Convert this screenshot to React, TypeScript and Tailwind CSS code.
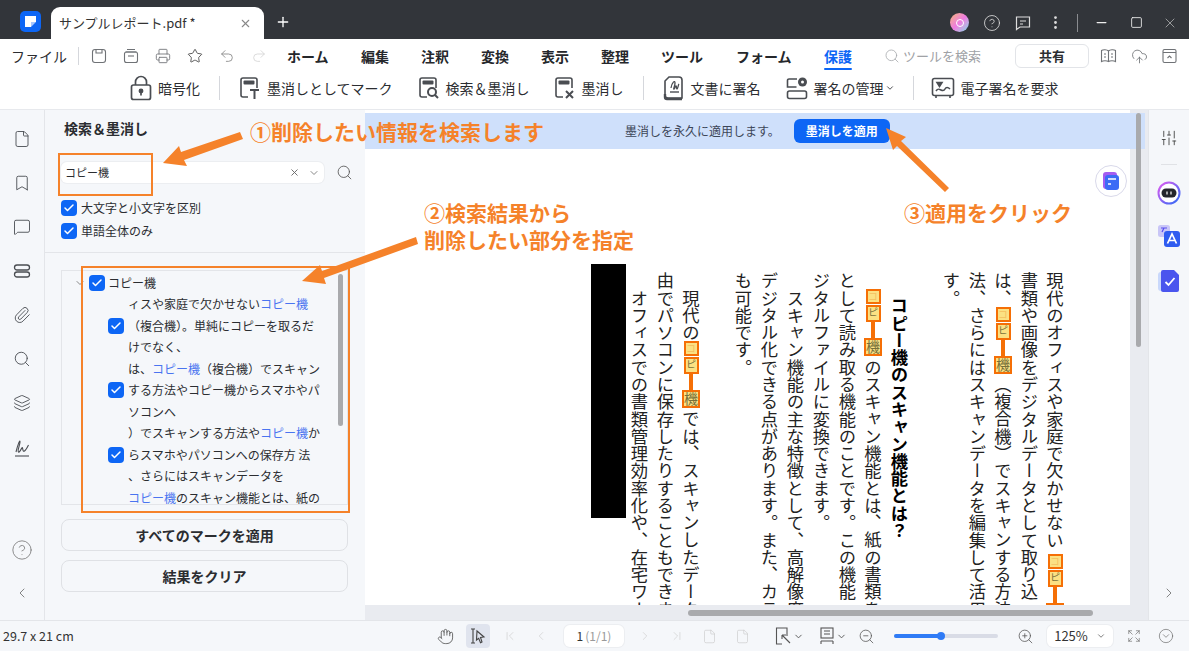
import {
  Bookmark,
  Check,
  ChevronDown,
  ChevronFirst,
  ChevronLast,
  ChevronLeft,
  ChevronRight,
  CircleChevronDown,
  CircleHelp,
  CloudUpload,
  Expand,
  File,
  Hand,
  Layers,
  MessageSquare,
  Minus,
  MoreVertical,
  Paperclip,
  Plus,
  Printer,
  Redo2,
  Search,
  SlidersVertical,
  Square,
  Star,
  Undo2,
  X,
  ZoomIn,
  ZoomOut,
} from 'lucide-react'

const ORANGE = '#f5822a'

function Tick({ className = '' }: { className?: string }) {
  return (
    <span className={`flex h-[16px] w-[16px] shrink-0 items-center justify-center rounded-[4px] bg-[#0d66f5] ${className}`}>
      <Check size={12} strokeWidth={3} color="#fff" />
    </span>
  )
}

function Divider() {
  return <span className="block h-[24px] w-px shrink-0 bg-[#d5d7dc]" />
}

// toolbar pictograms: sheet with a dark header and a small badge at the corner
function SheetIcon({ badge }: { badge: 'T' | 'search' | 'x' }) {
  return (
    <svg width="22" height="24" viewBox="0 0 22 24" fill="none" stroke="#4a4d52" strokeWidth="1.6">
      <path d="M9 21H4a2 2 0 0 1-2-2V4a2 2 0 0 1 2-2h12a2 2 0 0 1 2 2v8" />
      <rect x="4.5" y="4.5" width="11" height="4" fill="#4a4d52" stroke="none" rx="1" />
      {badge === 'T' && <path d="M11 14h9M15.5 14v9" strokeWidth="2" />}
      {badge === 'search' && (
        <>
          <circle cx="14" cy="16" r="4" strokeWidth="2" />
          <path d="M17 19l3 3" strokeWidth="2" />
        </>
      )}
      {badge === 'x' && <path d="M12 15l7 7M19 15l-7 7" strokeWidth="2" />}
    </svg>
  )
}

function LockIcon() {
  return (
    <svg width="22" height="26" viewBox="0 0 22 26" fill="none" stroke="#4a4d52" strokeWidth="1.7">
      <rect x="1.5" y="10" width="19" height="14.5" rx="2" />
      <path d="M5.5 10V7a5.5 5.5 0 0 1 11 0v3" />
      <circle cx="11" cy="16" r="1.6" fill="#4a4d52" />
      <path d="M11 17v3.5" />
    </svg>
  )
}

function SignDocIcon() {
  return (
    <svg width="22" height="26" viewBox="0 0 22 26" fill="none" stroke="#4a4d52" strokeWidth="1.6">
      <path d="M6 2h10a3 3 0 0 1 3 3v18H5a3 3 0 0 1-3-3V6z" />
      <path d="M2 19v3a2 2 0 0 0 2 2h15" strokeWidth="2.4" />
      <path d="M8 13c1-6 4-8 4-5s-2 6-1 6 1-3 2-3 0 3 1 3 1-4 2-5" strokeWidth="1.3" />
      <path d="M7 17h9" strokeWidth="1.4" />
    </svg>
  )
}

function ManageSignIcon() {
  return (
    <svg width="22" height="24" viewBox="0 0 22 24" fill="none" stroke="#4a4d52" strokeWidth="1.6">
      <path d="M11 3H3a1.500 1.500 0 0 0-1.500 1.500V11h9" />
      <rect x="1.500" y="15" width="19" height="7.500" rx="2" />
      <circle cx="16.500" cy="6" r="4.500" fill="#4a4d52" stroke="none" />
      <circle cx="16.500" cy="6" r="1.500" fill="#fff" stroke="none" />
    </svg>
  )
}

function RequestSignIcon() {
  return (
    <svg width="24" height="24" viewBox="0 0 24 24" fill="none" stroke="#4a4d52" strokeWidth="1.6">
      <rect x="1.500" y="2.500" width="21" height="17" rx="2" />
      <path d="M6 6.500h5l-2.500 4z" fill="#4a4d52" />
      <path d="M5 15c2-3 3-2 5-1s3 1 4-1 3-2 5 0" />
      <path d="M5 20v2M19 20v2" />
    </svg>
  )
}

function TabLogo() {
  return (
    <svg width="21" height="21" viewBox="0 0 21 21">
      <rect width="21" height="21" rx="5" fill="#0d66f5" />
      <path d="M5 5h11v6h-5v5H5z" fill="#fff" />
      <path d="M11 11h5l-5 5z" fill="#a9c8ff" />
    </svg>
  )
}

function MenuTab({ label, active, className = '' }: { label: string; active?: boolean; className?: string }) {
  return (
    <span className={`relative shrink-0 text-[14px] font-bold ${active ? 'text-[#0d66f5]' : 'text-[#25272b]'} ${className}`}>
      {label}
      {active && <span className="absolute -bottom-[3px] left-0 h-[2px] w-full rounded bg-[#0d66f5]" />}
    </span>
  )
}

function Tool({ icon, label, className = '' }: { icon: React.ReactNode; label: string; className?: string }) {
  return (
    <div className={`flex shrink-0 items-center gap-[6px] ${className}`}>
      {icon}
      <span className="text-[14px] text-[#2b2d31]">{label}</span>
    </div>
  )
}

function Blue({ children }: { children: React.ReactNode }) {
  return <span className="text-[#4a74f0]">{children}</span>
}

// one redacted hit in the vertical text
function Hit({ className = '' }: { className?: string }) {
  const box = 'block shrink-0 overflow-hidden border-2 border-[#f56f06] bg-[#fbe183]'
  return (
    <span className={`inline-flex h-[69px] w-[18px] -translate-x-[4px] items-center align-middle font-normal ${className}`}>
      <span className={`${box} h-[15px] w-[15px] text-[10px] leading-[11px] text-[#f5c060]`}>コ</span>
      <span className={`${box} mt-[1px] h-[17px] w-[15px] text-[10px] leading-[11px] text-[#77703a]`}>ピ</span>
      <span className="my-[1px] block h-[16px] w-[4px] shrink-0 bg-[#f56f06]" />
      <span className={`${box} h-[18px] w-[18px] text-[14px] leading-[14px] text-[#77703a]`}>機</span>
    </span>
  )
}

function VLine({ children, bold, blank }: { children?: React.ReactNode; bold?: boolean; blank?: boolean }) {
  return (
    <p className={`h-[360px] w-[26px] shrink-0 whitespace-nowrap text-[17.3px] leading-[26px] ${bold ? 'pt-[25px] font-bold text-black' : 'text-[#222]'}`}>
      {blank ? '\u00a0' : children}
    </p>
  )
}

const SIDE_TREE_TEXT = 'text-[12px] leading-[21.5px] text-[#2b2d31]'

export default function App() {
  return (
    <div className="relative flex h-screen w-full flex-col overflow-hidden bg-[#f5f7fa] font-['Noto_Sans_CJK_JP','Liberation_Sans',sans-serif] text-[#2b2d31]">
      {/* title bar */}
      <div className="flex h-[39px] shrink-0 items-end bg-[#32353a]">
        <div className="mb-[7px] ml-[20px] mr-[10px] shrink-0"><TabLogo /></div>
        <div className="flex h-[32px] w-[213px] shrink-0 items-center rounded-t-[9px] bg-white pl-[8px] pr-[12px]">
          <span className="flex-1 text-[13px] text-[#333]">サンプルレポート.pdf *</span>
          <X size={13} color="#888" />
        </div>
        <Plus size={16} color="#fff" className="mb-[9px] ml-[11px]" />
        <div className="mb-[7px] ml-auto flex items-center">
          <span className="mr-[14px] flex h-[19px] w-[19px] items-center justify-center rounded-full bg-gradient-to-br from-[#f7b267] via-[#ee7ae0] to-[#57d8e6]">
            <span className="h-[8px] w-[8px] rounded-full border border-white" />
          </span>
          <CircleHelp size={18} strokeWidth={1.1} color="#ddd" className="mr-[14px]" />
          <svg width="16" height="16" viewBox="0 0 16 16" fill="none" stroke="#ddd" strokeWidth="1.2" className="mr-[16px]">
            <path d="M1.500 2h13v10H5l-3.500 2.500zM5 6h6M5 9h3" />
          </svg>
          <MoreVertical size={17} color="#ddd" className="mr-[13px]" />
          <span className="mr-[16px] h-[18px] w-px bg-[#8a8c90]" />
          <Minus size={15} color="#eee" className="mr-[21px]" />
          <Square size={13} strokeWidth={1.6} color="#eee" className="mr-[19px]" />
          <X size={16} strokeWidth={1} color="#ccc" className="mr-[11px]" />
        </div>
      </div>

      {/* menu row */}
      <div className="flex h-[34px] shrink-0 items-center bg-white pl-[11px]">
        <span className="w-[56px] shrink-0 text-[14px]">ファイル</span>
        <span className="ml-[11px] h-[18px] w-px bg-[#d5d7dc]" />
        <div className="ml-[12px] flex w-[196px] shrink-0 items-center gap-[16px] text-[#6f7276]">
          <Save />
          <Archive />
          <Printer size={16} strokeWidth={1.3} />
          <Star size={16} strokeWidth={1.3} color="#444" />
          <Undo2 size={16} strokeWidth={1.3} color="#888" />
          <Redo2 size={16} strokeWidth={1.3} color="#d5d5d5" />
        </div>
        <MenuTab label="ホーム" className="w-[74px]" />
        <MenuTab label="編集" className="w-[60px]" />
        <MenuTab label="注釈" className="w-[60px]" />
        <MenuTab label="変換" className="w-[60px]" />
        <MenuTab label="表示" className="w-[60px]" />
        <MenuTab label="整理" className="w-[60px]" />
        <MenuTab label="ツール" className="w-[75px]" />
        <MenuTab label="フォーム" className="w-[88px]" />
        <MenuTab label="保護" active />
        <Search size={16} strokeWidth={1.2} color="#a6a8ac" className="ml-[32px]" />
        <span className="ml-[3px] w-[112px] shrink-0 text-[13px] text-[#a0a2a6]">ツールを検索</span>
        <span className="flex h-[24px] w-[74px] shrink-0 items-center justify-center rounded-md border border-[#e2e4e8] text-[13px] font-bold">共有</span>
        <div className="ml-[11px] flex items-center gap-[14px] text-[#6f7276]">
          <BookIcon />
          <CloudUpload size={17} strokeWidth={1.2} />
          <DrawerIcon />
        </div>
      </div>

      {/* tool row */}
      <div className="flex h-[37px] shrink-0 items-center border-b border-[#e7e9ed] bg-white pb-[6px]">
        <Tool icon={<LockIcon />} label="暗号化" className="ml-[130px]" />
        <span className="ml-[19px]"><Divider /></span>
        <Tool icon={<SheetIcon badge="T" />} label="墨消しとしてマーク" className="ml-[19px]" />
        <Tool icon={<SheetIcon badge="search" />} label="検索＆墨消し" className="ml-[25px]" />
        <Tool icon={<SheetIcon badge="x" />} label="墨消し" className="ml-[24px]" />
        <span className="ml-[19px]"><Divider /></span>
        <Tool icon={<SignDocIcon />} label="文書に署名" className="ml-[19px]" />
        <Tool icon={<ManageSignIcon />} label="署名の管理" className="ml-[25px]" />
        <ChevronDown size={10} className="ml-[1px]" />
        <span className="ml-[18px]"><Divider /></span>
        <Tool icon={<RequestSignIcon />} label="電子署名を要求" className="ml-[17px]" />
      </div>

      {/* main */}
      <div className="flex min-h-0 flex-1">
        {/* left rail */}
        <div className="flex w-[45px] shrink-0 flex-col items-center border-r border-[#e3e5e9] pt-[20px] text-[#4a4d52]">
          <div className="flex flex-col items-center gap-[26px]">
            <File size={18} strokeWidth={1.2} />
            <Bookmark size={18} strokeWidth={1.2} />
            <MessageSquare size={18} strokeWidth={1.2} />
            <StackIcon />
            <Paperclip size={18} strokeWidth={1.2} />
            <Search size={18} strokeWidth={1.2} />
            <Layers size={18} strokeWidth={1.2} />
            <SignRailIcon />
          </div>
          <CircleHelp size={22} strokeWidth={0.9} color="#777" className="mt-auto" />
          <ChevronLeft size={16} strokeWidth={1.2} color="#666" className="mb-[19px] mt-[24px]" />
        </div>

        {/* search panel */}
        <div className="flex w-[320px] shrink-0 flex-col pl-[16px] pr-[17px]">
          <div className="pl-[3px] pt-[8px] text-[14px] font-bold leading-[20px]">検索＆墨消し</div>
          <div className="mt-[24px] flex items-center">
            <div className="flex h-[21px] w-[263px] shrink-0 items-center rounded-md bg-white pl-[4px] pr-[4px] shadow-[0_0_0_1px_#eceef1]">
              <span className="flex-1 text-[11px]">コピー機</span>
              <X size={11} color="#666" />
              <ChevronDown size={12} color="#888" className="ml-[8px]" />
            </div>
            <Search size={17} strokeWidth={1.2} color="#555" className="ml-[12px] shrink-0" />
          </div>
          <label className="mt-[16px] flex items-center gap-[4px] text-[12px] leading-[18px]"><Tick />大文字と小文字を区別</label>
          <label className="mt-[5px] flex items-center gap-[4px] text-[12px] leading-[18px]"><Tick />単語全体のみ</label>
          <div className="-ml-[16px] -mr-[17px] mt-[12px] h-px shrink-0 bg-[#e3e5e9]" />

          <div className="relative mt-[17px] h-[235px] shrink-0 overflow-hidden border border-[#e3e5e9] pl-[12px] pt-[1px]">
            <div className="flex h-[21px] items-center">
              <ChevronDown size={12} color="#888" />
              <Tick className="ml-[3px]" />
              <span className="ml-[3px] text-[12px]">コピー機</span>
            </div>
            <div className={`${SIDE_TREE_TEXT} w-[250px] pl-[54px]`}>
              <p className="whitespace-nowrap">ィスや家庭で欠かせない<Blue>コピー機</Blue></p>
              <div className="-ml-[20px] flex gap-[4px]">
                <Tick className="mt-[3px]" />
                <p>（複合機）。単純にコピーを取るだけでなく、</p>
              </div>
              <p className="whitespace-nowrap">は、<Blue>コピー機</Blue>（複合機）でスキャン</p>
              <div className="-ml-[20px] flex gap-[4px]">
                <Tick className="mt-[3px]" />
                <p>する方法やコピー機からスマホやパソコンへ</p>
              </div>
              <p className="whitespace-nowrap">）でスキャンする方法や<Blue>コピー機</Blue>か</p>
              <div className="-ml-[20px] flex gap-[4px]">
                <Tick className="mt-[3px]" />
                <p className="whitespace-nowrap">らスマホやパソコンへの保存方 法</p>
              </div>
              <p>、さらにはスキャンデータを</p>
              <p className="whitespace-nowrap"><Blue>コピー機</Blue>のスキャン機能とは、紙の</p>
            </div>
            <span className="absolute right-[4px] top-[3px] h-[152px] w-[5px] rounded bg-[#a9aaad]" />
          </div>

          <button className="mt-[14px] h-[32px] shrink-0 rounded-lg border border-[#dfe1e5] text-[14px] font-bold">すべてのマークを適用</button>
          <button className="mt-[9px] h-[32px] shrink-0 rounded-lg border border-[#dfe1e5] text-[14px] font-bold">結果をクリア</button>
        </div>

        {/* document */}
        <div className="relative flex min-w-0 flex-1 flex-col bg-[#e9ebf0]">
          <div className="flex min-h-0 flex-1">
            <div className="flex flex-1 justify-end overflow-hidden bg-white pr-[62px] pt-[162px]">
              <div className="flex h-[360px] flex-col items-start [writing-mode:vertical-rl]">
                <VLine>現代のオフィスや家庭で欠かせない<Hit className="mt-[5px]" />が</VLine>
                <VLine>書類や画像をデジタルデータとして取り込</VLine>
                <VLine>は、<Hit />（複合機）でスキャンする方法</VLine>
                <VLine>法、さらにはスキャンデータを編集して活用</VLine>
                <VLine>す。</VLine>
                <VLine blank />
                <VLine bold>コピー機のスキャン機能とは？</VLine>
                <VLine>　<Hit />のスキャン機能とは、紙の書類を</VLine>
                <VLine>として読み取る機能のことです。この機能</VLine>
                <VLine>ジタルファイルに変換できます。</VLine>
                <VLine>　スキャン機能の主な特徴として、高解像度</VLine>
                <VLine>デジタル化できる点があります。また、カラ</VLine>
                <VLine>も可能です。</VLine>
                <VLine blank />
                <VLine>　現代の<Hit />では、スキャンしたデータを</VLine>
                <VLine>由でパソコンに保存したりすることもできま</VLine>
                <VLine>　オフィスでの書類管理効率化や、在宅ワーク</VLine>
                <div className="mt-[-8px] h-[254px] w-[35px] shrink-0 bg-black" />
              </div>
            </div>
            <div className="w-[18px] shrink-0" />
          </div>
          <div className="flex h-[15px] shrink-0 items-center">
            <span className="ml-[323px] h-[6px] w-[405px] rounded bg-[#a9aaad]" />
          </div>

          {/* redaction banner lies over the page */}
          <div className="absolute left-0 right-[3px] top-[3px] flex h-[36px] items-center bg-[#cfe0fb]">
            <span className="ml-[260px] text-[12px] text-[#3c4658]">墨消しを永久に適用します。</span>
            <span className="ml-[14px] flex h-[24px] w-[96px] items-center justify-center rounded-md bg-[#0d66f5] text-[12px] font-bold text-white">墨消しを適用</span>
          </div>
          <span className="absolute right-[7px] top-[3px] h-[234px] w-[5px] rounded bg-[#a9aaad]" />
          <span className="absolute right-[21px] top-[55px] flex h-[32px] w-[32px] items-center justify-center rounded-full border border-[#d9d9ea] bg-white">
            <svg width="20" height="20" viewBox="0 0 20 20">
              <rect x="2" y="1" width="14" height="17" rx="3" fill="#a45cf0" />
              <rect x="4" y="4" width="14" height="15" rx="3" fill="#3c6bf5" />
              <path d="M7 8h8M7 13h3" stroke="#fff" strokeWidth="1.4" />
            </svg>
          </span>
        </div>

        {/* right rail */}
        <div className="flex w-[41px] shrink-0 flex-col items-center border-l border-[#e3e5e9] pt-[19px]">
          <SlidersVertical size={18} strokeWidth={1.2} color="#444" />
          <span className="mt-[17px] h-px w-[16px] bg-[#e0e2e6]" />
          <RobotIcon />
          <TranslateIcon />
          <CheckDocIcon />
          <ChevronRight size={16} strokeWidth={1.2} color="#666" className="mb-[19px] mt-auto" />
        </div>
      </div>

      {/* status bar */}
      <div className="flex h-[31px] shrink-0 items-center border-t border-[#e3e5e9] pl-[3px] text-[#8a8d92]">
        <span className="w-[434px] shrink-0 text-[12.5px] text-[#333]">29.7 x 21 cm</span>
        <Hand size={17} strokeWidth={1.2} color="#555" />
        <span className="ml-[12px] flex h-[24px] w-[24px] items-center justify-center rounded bg-[#e0e4ee]"><SelectIcon /></span>
        <ChevronFirst size={14} strokeWidth={1.1} color="#ccc" className="ml-[13px]" />
        <ChevronLeft size={14} strokeWidth={1.1} color="#ccc" className="ml-[17px]" />
        <span className="ml-[16px] flex h-[22px] w-[60px] items-center justify-center rounded-md bg-white text-[12px] text-[#333] shadow-[0_0_0_1px_#eceef1]">1<span className="ml-[2px] text-[#9a9a9a]">(1/1)</span></span>
        <ChevronRight size={14} strokeWidth={1.1} color="#ccc" className="ml-[14px]" />
        <ChevronLast size={14} strokeWidth={1.1} color="#ccc" className="ml-[18px]" />
        <File size={15} strokeWidth={1.1} color="#ccc" className="ml-[18px]" />
        <File size={15} strokeWidth={1.1} color="#ccc" className="ml-[18px]" />
        <FitIcon />
        <ChevronDown size={11} color="#555" className="ml-[1px]" />
        <PagesIcon />
        <ChevronDown size={11} color="#555" className="ml-[1px]" />
        <ZoomOut size={17} strokeWidth={1.1} color="#555" className="ml-[11px]" />
        <div className="relative ml-[19px] flex h-[4px] w-[104px] shrink-0 rounded bg-[#d9dce6]">
          <span className="h-full w-[47px] rounded bg-[#2f7bf6]" />
          <span className="absolute left-[43px] top-[-2px] h-[8px] w-[8px] rounded-full bg-[#2f7bf6]" />
        </div>
        <ZoomIn size={17} strokeWidth={1.1} color="#555" className="ml-[19px]" />
        <span className="ml-[13px] flex h-[22px] w-[66px] items-center justify-center gap-[8px] rounded-md bg-white text-[13px] text-[#333] shadow-[0_0_0_1px_#eceef1]">125%<ChevronDown size={10} color="#666" /></span>
        <Expand size={14} strokeWidth={1.1} color="#666" className="ml-[14px]" />
        <CircleChevronDown size={16} strokeWidth={1} color="#666" className="ml-[17px]" />
      </div>

      {/* hand-drawn tutorial marks over the screenshot */}
      <span className="absolute left-[58px] top-[153px] h-[43px] w-[95px] border-2 border-[#f5822a]" />
      <span className="absolute left-[81px] top-[266px] h-[247px] w-[269px] border-2 border-[#f5822a]" />
      <svg className="pointer-events-none absolute left-0 top-0" width="1189" height="651" fill={ORANGE}>
        <path d="M240 132 L181 152 L179 146 L163 163 L187 166 L184 160 L243 139 Z" />
        <path d="M416 237 L322 271 L320 265 L302 281 L326 284 L324 278 L418 244 Z" />
        <path d="M949 188 L901 141 L906 137 L886 128 L893 150 L897 146 L945 192 Z" />
      </svg>
      <span className="absolute left-[250px] top-[117px] text-[21px] font-bold leading-[28px] text-[#f5822a]">①削除したい情報を検索します</span>
      <span className="absolute left-[424px] top-[199px] text-[21px] font-bold leading-[27px] text-[#f5822a]">②検索結果から<br />削除したい部分を指定</span>
      <span className="absolute left-[904px] top-[198px] text-[21px] font-bold leading-[28px] text-[#f5822a]">③適用をクリック</span>
    </div>
  )
}

function Save() {
  return (
    <svg width="16" height="16" viewBox="0 0 16 16" fill="none" stroke="currentColor" strokeWidth="1.1" className="shrink-0">
      <rect x="1.500" y="1.500" width="13" height="13" rx="2.500" />
      <path d="M5 1.500v3.500h6V1.500" />
    </svg>
  )
}

function Archive() {
  return (
    <svg width="16" height="16" viewBox="0 0 16 16" fill="none" stroke="currentColor" strokeWidth="1.1" className="shrink-0">
      <path d="M4 1.500h8M2.500 4h11" />
      <rect x="1.500" y="4" width="13" height="10.500" rx="2" />
      <path d="M5 8h6" />
    </svg>
  )
}

function BookIcon() {
  return (
    <svg width="17" height="16" viewBox="0 0 17 16" fill="none" stroke="currentColor" strokeWidth="1.1">
      <path d="M8.500 3C7 1.500 3 1.500 1.500 2.500v11c1.500-1 5.500-1 7 0 1.500-1 5.500-1 7 0v-11C14 1.500 10 1.500 8.500 3zM8.500 3v10.500" />
      <path d="M4 6h2M4 9h2M11 6h2M11 9h2" />
    </svg>
  )
}

function DrawerIcon() {
  return (
    <svg width="15" height="16" viewBox="0 0 15 16" fill="none" stroke="currentColor" strokeWidth="1.1">
      <rect x="1" y="1.500" width="13" height="13" rx="1.500" />
      <path d="M1 4.500h13M5.500 10l2-2 2 2" />
    </svg>
  )
}

function StackIcon() {
  return (
    <svg width="18" height="18" viewBox="0 0 18 18" fill="none" stroke="currentColor" strokeWidth="1.3">
      <rect x="1.500" y="3" width="15" height="5" rx="2.500" />
      <rect x="1.500" y="10" width="15" height="5" rx="2.500" />
    </svg>
  )
}

function SignRailIcon() {
  return (
    <svg width="18" height="20" viewBox="0 0 18 20" fill="none" stroke="currentColor" strokeWidth="1.1">
      <path d="M3 14C5 6 7 1 7 4s-3 9-1.500 10S9 8 9.500 10s.5 4 2 3 3-4 4-6" />
      <path d="M2 18h14" />
    </svg>
  )
}

function SelectIcon() {
  return (
    <svg width="18" height="18" viewBox="0 0 18 18" fill="none" stroke="#444" strokeWidth="1.1">
      <path d="M2 2h4M2 16h4M4 2v14" />
      <path d="M8 4l7 6-3.500.5L13 15l-1.500.7-1.800-4.400L7.500 13z" />
    </svg>
  )
}

function FitIcon() {
  return (
    <svg width="18" height="20" viewBox="0 0 18 20" fill="none" stroke="#555" strokeWidth="1.1" className="ml-[24px] shrink-0">
      <path d="M8 18H2.500V2H13v8" />
      <path d="M8 9l8 8M8 9v4M8 9h4" />
    </svg>
  )
}

function PagesIcon() {
  return (
    <svg width="16" height="20" viewBox="0 0 16 20" fill="none" stroke="#555" strokeWidth="1.1" className="ml-[15px] shrink-0">
      <rect x="2" y="2" width="12" height="10" />
      <path d="M5 5h6M5 8h6M2 15h12M2 15v3M14 15v3" />
    </svg>
  )
}

function RobotIcon() {
  return (
    <svg width="24" height="24" viewBox="0 0 24 24" className="mt-[16px]">
      <defs>
        <linearGradient id="rb" x1="0" y1="0" x2="1" y2="1">
          <stop offset="0" stopColor="#e05cf0" />
          <stop offset="1" stopColor="#2f6bf6" />
        </linearGradient>
      </defs>
      <circle cx="12" cy="12" r="10.500" fill="#fff" stroke="url(#rb)" strokeWidth="2" />
      <rect x="4.500" y="7.500" width="15" height="9" rx="4.500" fill="#24262c" />
      <path d="M10 10.500v3M14 10.500v3" stroke="#fff" strokeWidth="1.2" />
    </svg>
  )
}

function TranslateIcon() {
  return (
    <svg width="24" height="24" viewBox="0 0 24 24" className="mt-[19px]">
      <rect x="1" y="1" width="12" height="12" rx="2.500" fill="#c9c6f7" />
      <path d="M4 4h6M7 4l-2 4" stroke="#5a4ff0" strokeWidth="1.2" fill="none" />
      <rect x="7" y="7" width="16" height="16" rx="3" fill="#2f5cf0" />
      <path d="M10.500 19.500L15 10l4.500 9.500M12 16.500h6" stroke="#fff" strokeWidth="1.700" fill="none" />
    </svg>
  )
}

function CheckDocIcon() {
  return (
    <svg width="22" height="24" viewBox="0 0 22 24" className="mt-[21px]">
      <rect x="0" y="3" width="14" height="19" rx="3" fill="#c9d8fb" />
      <path d="M5 1h11l5 5v15a2 2 0 0 1-2 2H5a2 2 0 0 1-2-2V3a2 2 0 0 1 2-2z" fill="#4a55ee" />
      <path d="M7.500 13l3 3 6-7" stroke="#fff" strokeWidth="1.800" fill="none" />
    </svg>
  )
}
